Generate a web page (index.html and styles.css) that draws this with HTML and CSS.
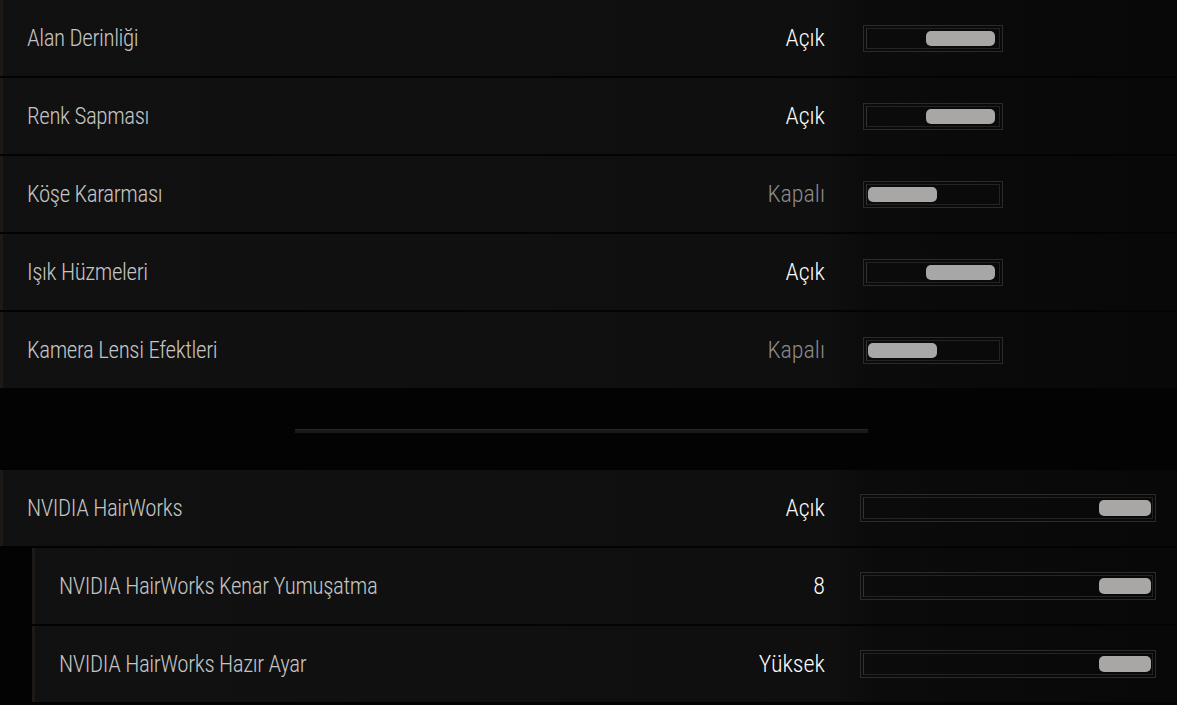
FILE: index.html
```html
<!DOCTYPE html>
<html lang="tr">
<head>
  <meta charset="UTF-8">
  <title>Grafik Ayarları</title>
  <link rel="stylesheet" href="styles.css">
</head>
<body>
  <div class="list">
    <div class="row">
      <span class="label">Alan Derinliği</span>
      <div class="ctl"><span class="value">Açık</span>
        <div class="slider on"><div class="track"><div class="knob"></div></div></div></div>
    </div>
    <div class="row">
      <span class="label">Renk Sapması</span>
      <div class="ctl"><span class="value">Açık</span>
        <div class="slider on"><div class="track"><div class="knob"></div></div></div></div>
    </div>
    <div class="row">
      <span class="label">Köşe Kararması</span>
      <div class="ctl"><span class="value off">Kapalı</span>
        <div class="slider"><div class="track"><div class="knob"></div></div></div></div>
    </div>
    <div class="row">
      <span class="label">Işık Hüzmeleri</span>
      <div class="ctl"><span class="value">Açık</span>
        <div class="slider on"><div class="track"><div class="knob"></div></div></div></div>
    </div>
    <div class="row">
      <span class="label">Kamera Lensi Efektleri</span>
      <div class="ctl"><span class="value off">Kapalı</span>
        <div class="slider"><div class="track"><div class="knob"></div></div></div></div>
    </div>

    <div class="sep"><div class="sep-line"></div></div>

    <div class="row">
      <span class="label">NVIDIA HairWorks</span>
      <div class="ctl"><span class="value">Açık</span>
        <div class="slider long on"><div class="track"><div class="knob"></div></div></div></div>
    </div>
    <div class="row sub">
      <span class="label">NVIDIA HairWorks Kenar Yumuşatma</span>
      <div class="ctl"><span class="value">8</span>
        <div class="slider long on"><div class="track"><div class="knob"></div></div></div></div>
    </div>
    <div class="row sub">
      <span class="label">NVIDIA HairWorks Hazır Ayar</span>
      <div class="ctl"><span class="value">Yüksek</span>
        <div class="slider long on"><div class="track"><div class="knob"></div></div></div></div>
    </div>
  </div>
</body>
</html>
```

FILE: styles.css
```css
body {
  margin: 0;
  background: #030303;
  font-family: "Roboto Condensed", "DejaVu Sans Condensed", "Liberation Sans", sans-serif;
  overflow: hidden;
}
.list {
  display: flex;
  flex-direction: column;
  gap: 2px;
}
.row {
  height: 76px;
  flex-shrink: 0;
  display: flex;
  align-items: center;
  padding-left: 24px;
  border-left: 3px solid #1d1916;
  background: linear-gradient(to right, #111, #0f0f0f 70%, #0b0b0b 74%, #080808);
}
.row.sub {
  margin-left: 32px;
}
.label {
  flex: 1;
  font-size: 23px;
  font-weight: 300;
  letter-spacing: -0.4px;
  color: #c4c4c4;
}
.ctl {
  width: 352px;
  flex-shrink: 0;
  display: flex;
  align-items: center;
  position: relative;
}
.value {
  position: absolute;
  right: 352px;
  white-space: nowrap;
  font-size: 24px;
  font-weight: 300;
  color: #fcfcfc;
}
.value.off {
  color: #8a8a8a;
}
.slider {
  margin-left: 38px;
  width: 140px;
  height: 27px;
  box-sizing: border-box;
  border: 1px solid #2b2b2b;
  padding: 2px;
}
.slider.long {
  margin-left: 35px;
  width: 296px;
  height: 28px;
}
.track {
  height: 100%;
  box-sizing: border-box;
  border: 1px solid #232323;
  border-left: 1px solid #333;
  display: flex;
  align-items: center;
  padding: 0 4px 0 1px;
}
.slider.long .track {
  padding-right: 1px;
}
.slider.on .track {
  justify-content: flex-end;
}
.knob {
  width: 69px;
  height: 15px;
  border-radius: 5px;
  background: #a9a7a5;
}
.slider.long .knob {
  width: 52px;
  height: 16px;
}
.sep {
  height: 78px;
  flex-shrink: 0;
  display: flex;
  align-items: center;
}
.sep-line {
  margin: 4px 0 0 295px;
  width: 573px;
  height: 3px;
  background: #191919;
  border-top: 1px solid #252525;
}
```
